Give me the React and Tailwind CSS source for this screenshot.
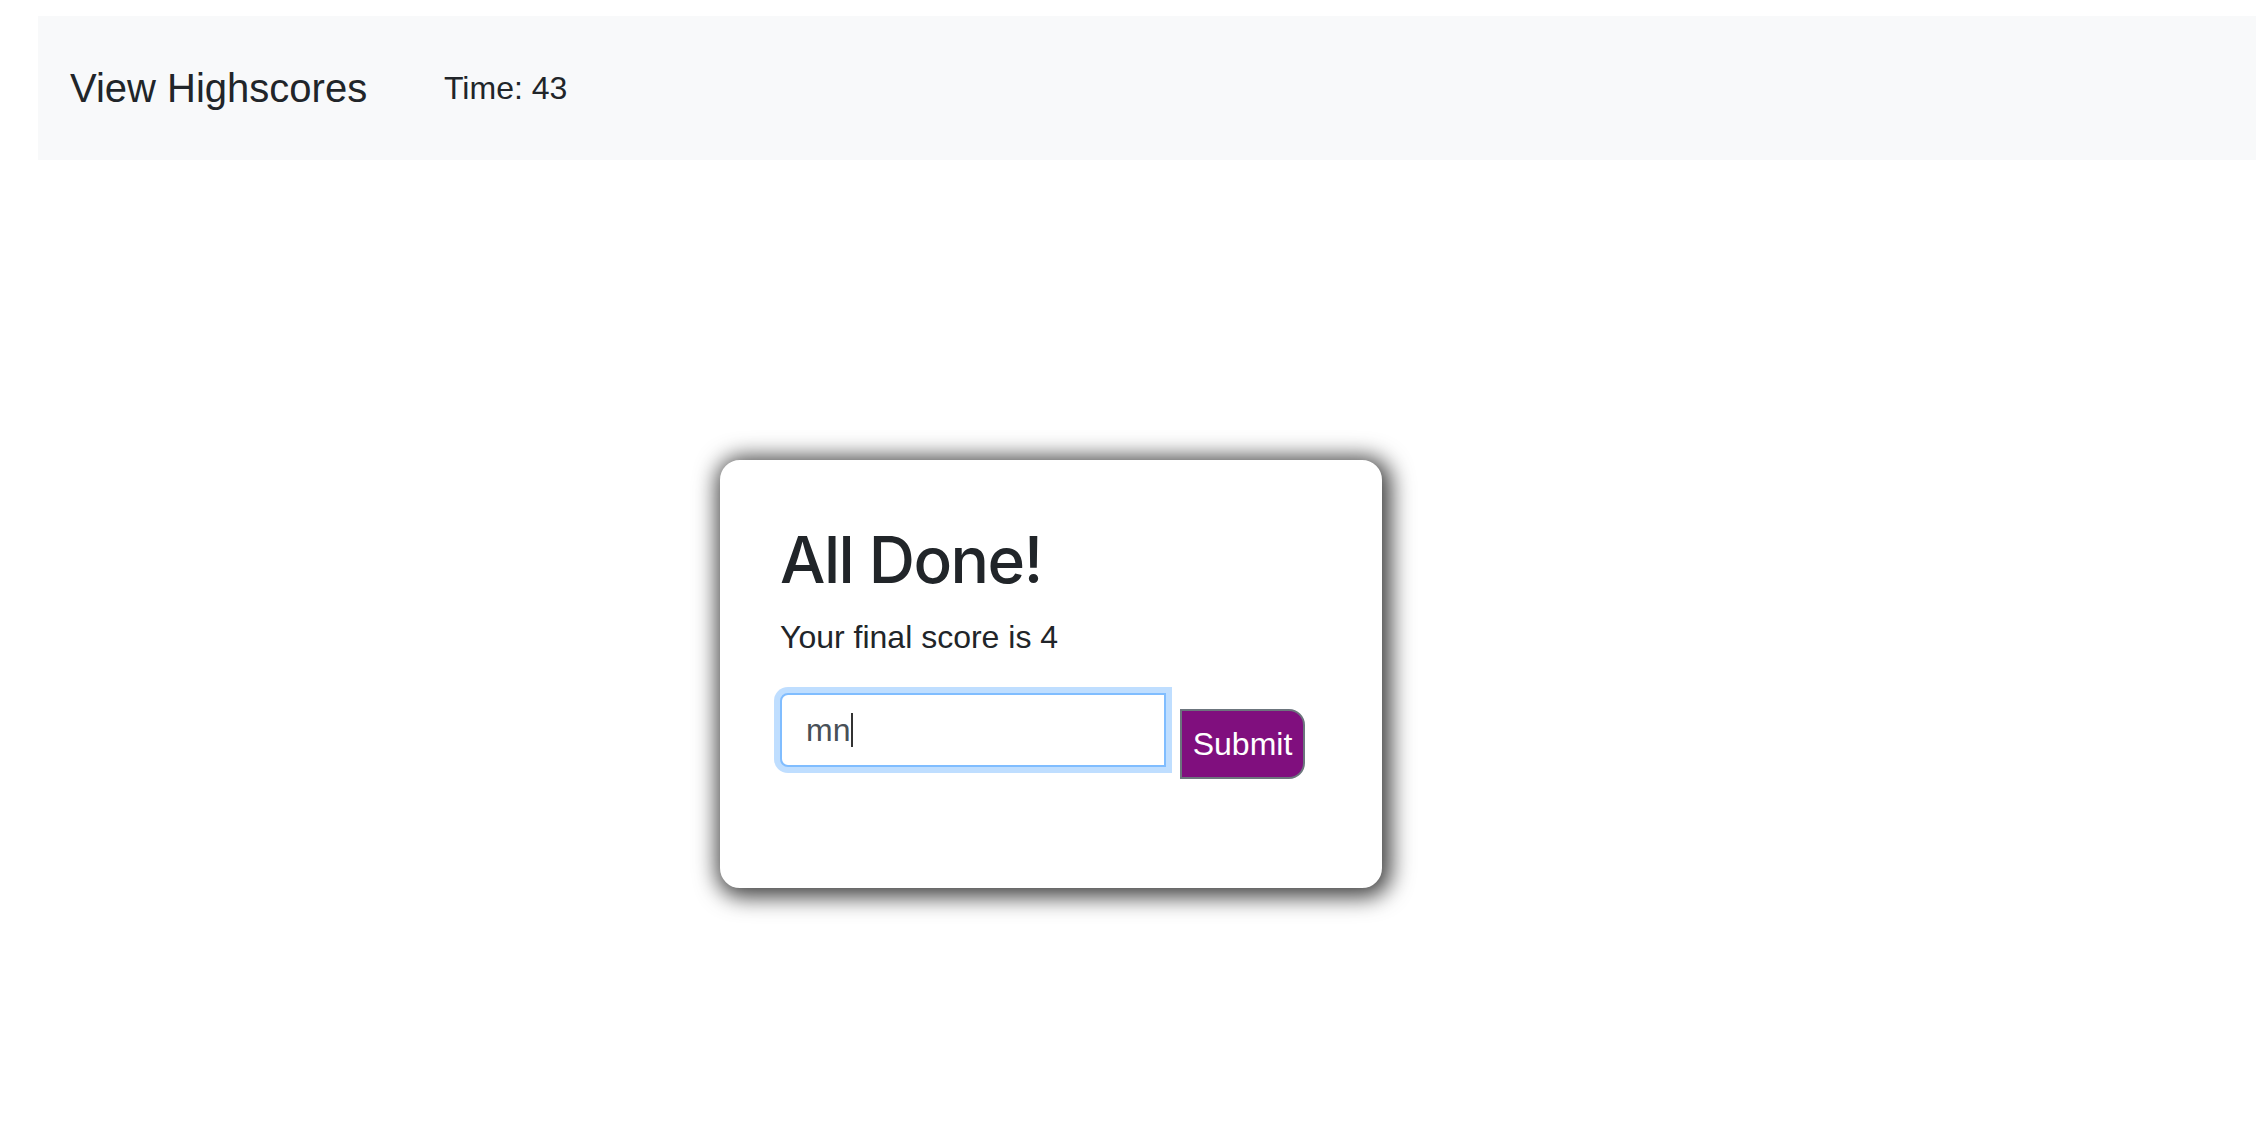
export default function App() {
  return (
    <div className="min-h-screen bg-white text-[#212529]" style={{ fontFamily: '"Liberation Sans", Arial, sans-serif' }}>
      <nav className="ml-[38px] mt-[16px] h-[144px] bg-[#f8f9fa] flex items-center">
        <div className="ml-[32px] w-[374px] text-[40px] leading-[48px]">View Highscores</div>
        <div className="text-[32px] leading-[48px]">Time: 43</div>
      </nav>
      <div className="ml-[720px] mt-[300px] w-[662px] h-[428px] bg-white border-2 border-white rounded-[20px] pt-[60px] px-[58px] shadow-[3px_3px_22px_6px_rgba(0,0,0,0.75)]">
        <h2 className="text-[64px] leading-[76.8px] font-medium tracking-[-1.5px] mb-[14px] font-['Inter',sans-serif]">All Done!</h2>
        <p className="text-[32px] leading-[48px] mb-[32px]">Your final score is 4</p>
        <div className="flex items-start">
          <div className="w-[386px] h-[74px] border-2 border-[#80bdff] rounded-l-[8px] shadow-[0_0_0_6px_rgba(0,123,255,0.25)] flex items-center pl-[24px] text-[32px] text-[#495057] bg-white">
            <span>mn</span>
            <span className="inline-block w-[2px] h-[34px] bg-[#333] ml-[1px]"></span>
          </div>
          <button className="ml-[14px] mt-[16px] w-[125px] h-[70px] bg-[#800f7e] border-2 border-[#6c757d] rounded-r-[16px] text-white text-[32px] leading-none flex items-center justify-center">
            Submit
          </button>
        </div>
      </div>
    </div>
  );
}
